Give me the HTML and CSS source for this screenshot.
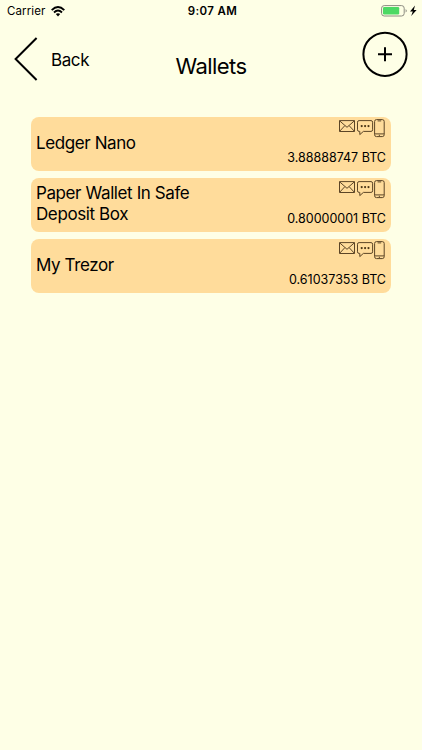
FILE: index.html
```
<!DOCTYPE html>
<html lang="en">
    <head>
        <meta charset="utf-8">
        <title>Wallets</title>
        <link rel="stylesheet" href="styles.css">
    </head>
    <body>
        <!-- shared icons for the wallet rows -->
        <svg class="icon-defs">
            <symbol id="contact-icons" viewBox="0 0 46 19">
                <g fill="none" stroke="#5c4526" stroke-width="1" stroke-linejoin="round">
                    <rect x="0.5" y="1.6" width="15" height="10.9"/>
                    <path d="M0.7 1.9L8 8.3L15.3 1.9M0.7 12.2L5.8 6.7M15.3 12.2L10.2 6.7"/>
                    <path d="M20.1 1.6H32Q33.6 1.6 33.6 3.2V10.8Q33.6 12.4 32 12.4H24.4L20.8 15.6V12.4H20.1Q18.5 12.4 18.5 10.8V3.2Q18.5 1.6 20.1 1.6Z"/>
                    <rect x="35.6" y="0.6" width="9.6" height="17" rx="1.9"/>
                    <path d="M38.6 1.9H42.2M35.6 14.9H45.2M39.8 16.3H41"/>
                </g>
                <g fill="#493416">
                    <circle cx="22.7" cy="7.1" r="1.1"/>
                    <circle cx="26.1" cy="7.1" r="1.1"/>
                    <circle cx="29.5" cy="7.1" r="1.1"/>
                </g>
            </symbol>
        </svg>

        <div class="status-bar">
            <div class="status-left">
                <span class="carrier">Carrier</span>
                <svg class="wifi" width="14" height="11" viewBox="0 0 14 11">
                    <g fill="none" stroke="#000" stroke-width="1.9">
                        <path d="M0.7 4.1Q7 -1.9 13.3 4.1"/>
                        <path d="M3 6.5Q7 2.7 11 6.5"/>
                    </g>
                    <path d="M4.8 8.1Q7 6.2 9.2 8.1L7 10.4Z"/>
                </svg>
            </div>
            <span class="time">9:07 AM</span>
            <div class="status-right">
                <svg width="37" height="12" viewBox="0 0 37 12">
                    <rect x="0.6" y="0.6" width="22.6" height="10.4" rx="2.6" fill="none" stroke="#8c8c80"/>
                    <rect x="2" y="2" width="16.2" height="7.4" rx="1.2" fill="#4cd964"/>
                    <path d="M24.6 4Q27 5.8 24.6 7.6Z" fill="#8c8c80"/>
                    <path d="M34 0.6L29 6.4H31.8L30.2 11L35.6 5.1H32.8Z"/>
                </svg>
            </div>
        </div>

        <div class="header">
            <div class="back-btn">
                <svg width="25" height="44" viewBox="0 0 25 44">
                    <path d="M22.6 1L1.6 22L22.6 43" fill="none" stroke="#000" stroke-width="2"/>
                </svg>
                <span>Back</span>
            </div>
            <h1 class="title">Wallets</h1>
            <div class="add-btn">
                <svg width="46" height="46" viewBox="0 0 46 46">
                    <circle cx="23" cy="23.3" r="21.6" fill="none" stroke="#000" stroke-width="2"/>
                    <path d="M16 23.3H30M23 16.3V30.3" stroke="#000" stroke-width="2"/>
                </svg>
            </div>
        </div>

        <div class="wallet-list">
            <div class="wallet">
                <span class="wallet-name">Ledger Nano</span>
                <div class="wallet-info">
                    <svg class="contact"><use href="#contact-icons"/></svg>
                    <span class="balance">3.88888747 BTC</span>
                </div>
            </div>
            <div class="wallet">
                <span class="wallet-name">Paper Wallet In Safe Deposit Box</span>
                <div class="wallet-info">
                    <svg class="contact"><use href="#contact-icons"/></svg>
                    <span class="balance">0.80000001 BTC</span>
                </div>
            </div>
            <div class="wallet">
                <span class="wallet-name">My Trezor</span>
                <div class="wallet-info">
                    <svg class="contact"><use href="#contact-icons"/></svg>
                    <span class="balance">0.61037353 BTC</span>
                </div>
            </div>
        </div>
    </body>
</html>
```

FILE: styles.css
```
* {
    box-sizing: border-box;
}

body {
    margin: 0;
    min-height: 100vh;

    font-family: Inter, "Liberation Sans", sans-serif;
    color: black;
    background-color: #feffe6;
}

.icon-defs {
    display: none;
}

.status-bar {
    display: grid;
    grid-template-columns: 1fr auto 1fr;
    align-items: center;

    height: 22px;
    padding: 0 4px 0 7px;

    font-size: 11.5px;
}

.status-left {
    display: flex;
    align-items: center;
    gap: 6px;
}

.carrier {
    letter-spacing: 0.1px;
}

.time {
    font-weight: 600;
    letter-spacing: 0.35px;
}

.status-right {
    display: flex;
    justify-content: flex-end;
}

.header {
    display: grid;
    grid-template-columns: 1fr auto 1fr;
    align-items: start;

    height: 94px;
    padding: 9px 14px 0 14px;
}

.back-btn {
    display: flex;
    align-items: center;
    gap: 12px;

    padding-top: 6px;

    font-size: 17px;
    letter-spacing: -0.4px;
}

.back-btn span {
    padding-top: 2px;
}

.title {
    margin: 21px 0 0 0;

    font-size: 22px;
    font-weight: 400;
    line-height: 28px;
    letter-spacing: -0.55px;
}

.add-btn {
    display: flex;
    justify-content: flex-end;
}

.wallet-list {
    display: flex;
    flex-direction: column;
    gap: 6.5px;

    padding: 0.5px 31px 0 31px;
}

.wallet {
    display: flex;
    justify-content: space-between;

    height: 54.5px;
    padding: 2px 5px 4px 5px;

    border-radius: 8px;
    background-color: #ffdc9b;
}

.wallet-name {
    align-self: center;

    width: 170px;

    font-size: 17px;
    line-height: 20.5px;
    letter-spacing: -0.4px;
}

.wallet-info {
    display: flex;
    flex-direction: column;
    align-items: flex-end;
    justify-content: space-between;
}

.contact {
    width: 46px;
    height: 19px;
    margin-right: 1px;
}

.balance {
    font-size: 12.5px;
    line-height: 18px;
}
```
